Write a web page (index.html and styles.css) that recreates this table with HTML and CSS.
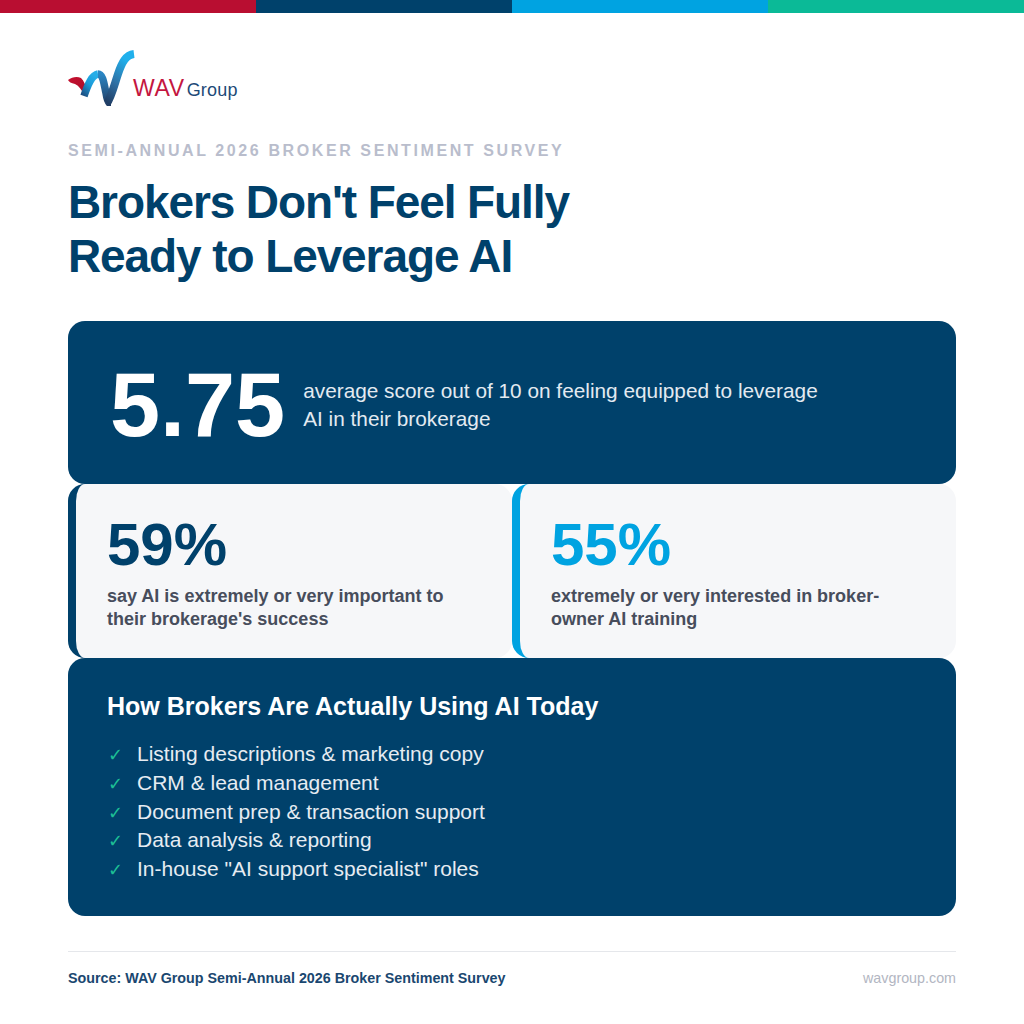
FILE: index.html
```html
<!DOCTYPE html>
<html lang="en">
<head>
<meta charset="utf-8">
<title>WAV Group – Broker Sentiment Survey</title>
<link rel="stylesheet" href="styles.css">
</head>
<body>
<div class="topbar">
  <div class="seg seg-red"></div>
  <div class="seg seg-navy"></div>
  <div class="seg seg-cyan"></div>
  <div class="seg seg-teal"></div>
</div>
<main class="page">
  <div class="logo">
    <svg class="logo-mark" viewBox="0 0 68 56" width="68" height="56" aria-hidden="true">
      <defs>
        <linearGradient id="hump" x1="0" y1="1" x2="0.6" y2="0">
          <stop offset="0" stop-color="#1d4f82"/>
          <stop offset="0.55" stop-color="#1a9ad8"/>
          <stop offset="1" stop-color="#27aee8"/>
        </linearGradient>
        <linearGradient id="hump2" x1="0" y1="0" x2="0" y2="1">
          <stop offset="0" stop-color="#2a86c4"/>
          <stop offset="1" stop-color="#223f66"/>
        </linearGradient>
        <linearGradient id="longs" x1="0" y1="1" x2="0.4" y2="0">
          <stop offset="0" stop-color="#1f3c62"/>
          <stop offset="0.45" stop-color="#2f6fa3"/>
          <stop offset="1" stop-color="#20b0ec"/>
        </linearGradient>
        <linearGradient id="redg" x1="0" y1="0" x2="1" y2="1">
          <stop offset="0" stop-color="#c8102e"/>
          <stop offset="1" stop-color="#a30f2b"/>
        </linearGradient>
      </defs>
      <path d="M0 30 C4 27 9 26 13 28 C16 31 18 36 20 42 L16 45 C14 40 11 36 7 34 C3 33 1 32 0 30 Z" fill="url(#redg)"/>
      <path d="M16 46 C20 34 24 25 30 24" fill="none" stroke="url(#hump)" stroke-width="7.5"/>
      <path d="M30 24 C35 24 36 34 38 43 C39 50 41 54 43 54" fill="none" stroke="url(#hump2)" stroke-width="7.5"/>
      <path d="M39 53 C43 48 46 36 50 24 C54 12 58 5 66 4" fill="none" stroke="url(#longs)" stroke-width="8"/>
    </svg>
    <div class="logo-text">
      <span class="logo-wav">WAV</span><span class="logo-group">Group</span>
    </div>
  </div>

  <p class="eyebrow">SEMI-ANNUAL 2026 BROKER SENTIMENT SURVEY</p>
  <h1 class="title">Brokers Don't Feel Fully<br>Ready to Leverage AI</h1>

  <section class="card-hero">
    <div class="hero-num">5.75</div>
    <p class="hero-text">average score out of 10 on feeling equipped to leverage AI in their brokerage</p>
  </section>

  <section class="stat-row">
    <div class="stat stat-navy">
      <div class="stat-num">59%</div>
      <p class="stat-text">say AI is extremely or very important to their brokerage's success</p>
    </div>
    <div class="stat stat-cyan">
      <div class="stat-num">55%</div>
      <p class="stat-text">extremely or very interested in broker-owner AI training</p>
    </div>
  </section>

  <section class="card-list">
    <h2 class="list-title">How Brokers Are Actually Using AI Today</h2>
    <ul class="uses">
      <li><span class="check">✓</span>Listing descriptions &amp; marketing copy</li>
      <li><span class="check">✓</span>CRM &amp; lead management</li>
      <li><span class="check">✓</span>Document prep &amp; transaction support</li>
      <li><span class="check">✓</span>Data analysis &amp; reporting</li>
      <li><span class="check">✓</span>In-house "AI support specialist" roles</li>
    </ul>
  </section>

  <footer class="footer">
    <span class="source">Source: WAV Group Semi-Annual 2026 Broker Sentiment Survey</span>
    <span class="site">wavgroup.com</span>
  </footer>
</main>
</body>
</html>
```
FILE: styles.css
```css
* { box-sizing: border-box; }
html, body { margin: 0; padding: 0; background: #ffffff; }
body {
  font-family: "Liberation Sans", Arial, sans-serif;
  color: #00416b;
}
.topbar { display: flex; height: 13px; }
.seg { flex: 1; }
.seg-red { background: #b90e31; }
.seg-navy { background: #00416b; }
.seg-cyan { background: #00a3e1; }
.seg-teal { background: #0bba97; }

.page { padding: 37px 68px 0; }

.logo { display: flex; align-items: flex-end; height: 56px; }
.logo-mark { display: block; flex: none; margin-right: -3px; }
.logo-text {
  display: flex;
  align-items: baseline;
  margin-bottom: 6px;
}
.logo-wav {
  color: #c4163f;
  font-size: 23px;
  line-height: 23px;
  letter-spacing: 0.6px;
}
.logo-group {
  color: #1d4a77;
  font-size: 18px;
  line-height: 18px;
  margin-left: 2px;
  letter-spacing: 0.2px;
}

.eyebrow {
  margin: 35px 0 0;
  font-size: 16px;
  line-height: 20px;
  font-weight: 700;
  letter-spacing: 2.6px;
  color: #b9bdcc;
}
.title {
  margin: 14px 0 0;
  font-size: 46px;
  line-height: 54px;
  font-weight: 700;
  letter-spacing: -1.1px;
  color: #00416b;
}

.card-hero {
  margin-top: 38px;
  background: #00416b;
  border-radius: 17px;
  height: 163px;
  padding: 4px 42px 0;
  display: flex;
  align-items: center;
  gap: 18px;
}
.hero-num {
  font-size: 90px;
  line-height: 90px;
  font-weight: 700;
  color: #ffffff;
}
.hero-text {
  margin: 0;
  font-size: 20.8px;
  line-height: 28px;
  color: #e3eaf1;
  max-width: 530px;
}

.stat-row { display: grid; grid-template-columns: 1fr 1fr; }
.stat {
  background: #f6f7f9;
  border-radius: 17px;
  height: 174px;
  padding: 31px 30px 0 31px;
}
.stat-navy { border-left: 8px solid #00416b; }
.stat-cyan { border-left: 8px solid #00a3e1; }
.stat-num {
  font-size: 60px;
  line-height: 60px;
  font-weight: 700;
}
.stat-navy .stat-num { color: #00416b; }
.stat-cyan .stat-num { color: #00a3e1; }
.stat-text {
  margin: 10px 0 0;
  font-size: 18px;
  line-height: 23px;
  font-weight: 700;
  color: #474d5c;
  max-width: 350px;
}

.card-list {
  background: #00416b;
  border-radius: 17px;
  height: 258px;
  padding: 33px 39px 0;
}
.list-title {
  margin: 0;
  font-size: 25px;
  line-height: 30px;
  font-weight: 700;
  color: #ffffff;
}
.uses {
  list-style: none;
  margin: 19px 0 0;
  padding: 0;
}
.uses li {
  font-size: 21px;
  line-height: 28.8px;
  color: #e6ecf2;
}
.check {
  display: inline-block;
  width: 30px;
  padding-left: 1px;
  font-family: "DejaVu Sans", sans-serif;
  font-size: 18px;
  line-height: 1;
  color: #1dbf95;
}

.footer {
  margin-top: 35px;
  border-top: 1px solid #e5e7eb;
  padding-top: 17px;
  display: flex;
  justify-content: space-between;
  font-size: 14.3px;
  line-height: 18px;
}
.source { font-weight: 700; color: #1a4770; }
.site { color: #b2b6c2; }
```
